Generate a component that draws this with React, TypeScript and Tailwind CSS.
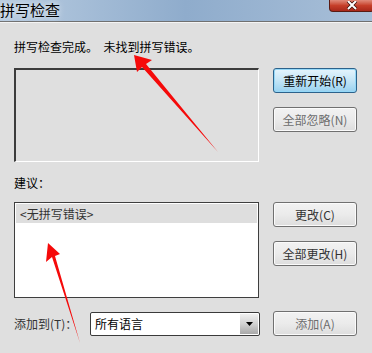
import React from 'react';

const font = { fontFamily: '"Noto Sans CJK SC", "Noto Sans", sans-serif' };

function Btn({ label, primary, disabled }: { label: string; primary?: boolean; disabled?: boolean }) {
  return (
    <div
      className={
        'flex h-[25px] w-[84px] items-center justify-center rounded-[3px] border text-[12px] ' +
        (primary
          ? 'border-[#2c628b] bg-gradient-to-b from-[#e5f4fc] via-[#c4e5f6] to-[#98d1ef] text-black shadow-[inset_0_0_0_1px_#94d8f8]'
          : 'border-[#707070] bg-gradient-to-b from-[#f2f2f2] via-[#ebebeb] to-[#dddddd] shadow-[inset_0_0_0_1px_#fbfbfb] ' +
            (disabled ? 'text-[#6d6d6d]' : 'text-[#333]'))
      }
    >
      {label}
    </div>
  );
}

export default function App() {
  return (
    <div className="relative h-[353px] w-[372px] overflow-hidden bg-[#dfdfdf]" style={font}>
      {/* Title bar */}
      <div className="relative flex h-[21px] items-start justify-between bg-gradient-to-r from-[#b7cbe0] via-[#8faccc] to-[#a8bfd8]">
        <span className="text-[15px] leading-[19px] text-black [text-shadow:0_0_6px_#ffffff]">拼写检查</span>
        <div className="mr-[-2px] flex h-[12px] w-[45px] items-end justify-center rounded-b-[4px] border border-t-0 border-[#5a1a12] bg-gradient-to-b from-[#e08a7a] via-[#c63f2a] to-[#a8271a] pb-[1px]">
          <svg width="12" height="9" viewBox="0 0 12 9">
            <path d="M2 0 L10 8 M10 0 L2 8" stroke="#3a0d08" strokeWidth="3.5" />
            <path d="M2 0 L10 8 M10 0 L2 8" stroke="#ffffff" strokeWidth="2" />
          </svg>
        </div>
      </div>
      <div className="h-px bg-[#707070]" />
      <div className="h-px bg-[#f4f4f4]" />

      <div className="px-[14px]">
        <div className="mt-[16px] text-[12px] leading-[16px] text-black">拼写检查完成。&nbsp;&nbsp;未找到拼写错误。</div>

        <div className="mt-[13px] flex gap-[14px]">
          <div className="h-[94px] w-[245px] border-l-2 border-t-2 border-r border-b border-l-[#3c3c3c] border-t-[#3c3c3c] border-r-[#ffffff] border-b-[#ffffff] bg-[#dfdfdf]" />
          <div className="flex flex-col gap-[14px]">
            <Btn label="重新开始(R)" primary />
            <Btn label="全部忽略(N)" disabled />
          </div>
        </div>

        <div className="mt-[13px] text-[12px] leading-[16px] text-black">建议：</div>

        <div className="mt-[11px] flex gap-[14px]">
          <div className="h-[96px] w-[245px] border border-[#3e3e3e] bg-white p-px">
            <div className="h-[19px] bg-[#dedede] pl-[4px] text-[12px] leading-[19px] text-[#333]">&lt;无拼写错误&gt;</div>
          </div>
          <div className="flex flex-col gap-[14px]">
            <Btn label="更改(C)" />
            <Btn label="全部更改(H)" />
          </div>
        </div>

        <div className="mt-[13px] flex items-center">
          <span className="w-[76px] text-[12px] text-[#333]">添加到(T)：</span>
          <div className="flex h-[24px] w-[170px] items-center rounded-[2px] border border-[#3a3a3a] bg-white p-px">
            <span className="flex-1 pl-[3px] text-[12px] text-black">所有语言</span>
            <div className="flex h-full w-[18px] items-center justify-center bg-gradient-to-b from-[#f0f0f0] via-[#d2d2d2] to-[#a8a8a8]">
              <svg width="7" height="4" viewBox="0 0 7 4">
                <path d="M0 0 H7 L3.5 4 Z" fill="#000" />
              </svg>
            </div>
          </div>
          <div className="ml-[13px]">
            <Btn label="添加(A)" disabled />
          </div>
        </div>
      </div>

      {/* Red annotation arrows */}
      <svg className="pointer-events-none absolute left-0 top-0" width="372" height="353">
        <polygon points="134,55 152,60 146,64 218,152 142,67 137,72" fill="#f50a0a" />
        <polygon points="48,243 60,254 55,256 80,343 52,257 46,262" fill="#f50a0a" />
      </svg>
    </div>
  );
}
